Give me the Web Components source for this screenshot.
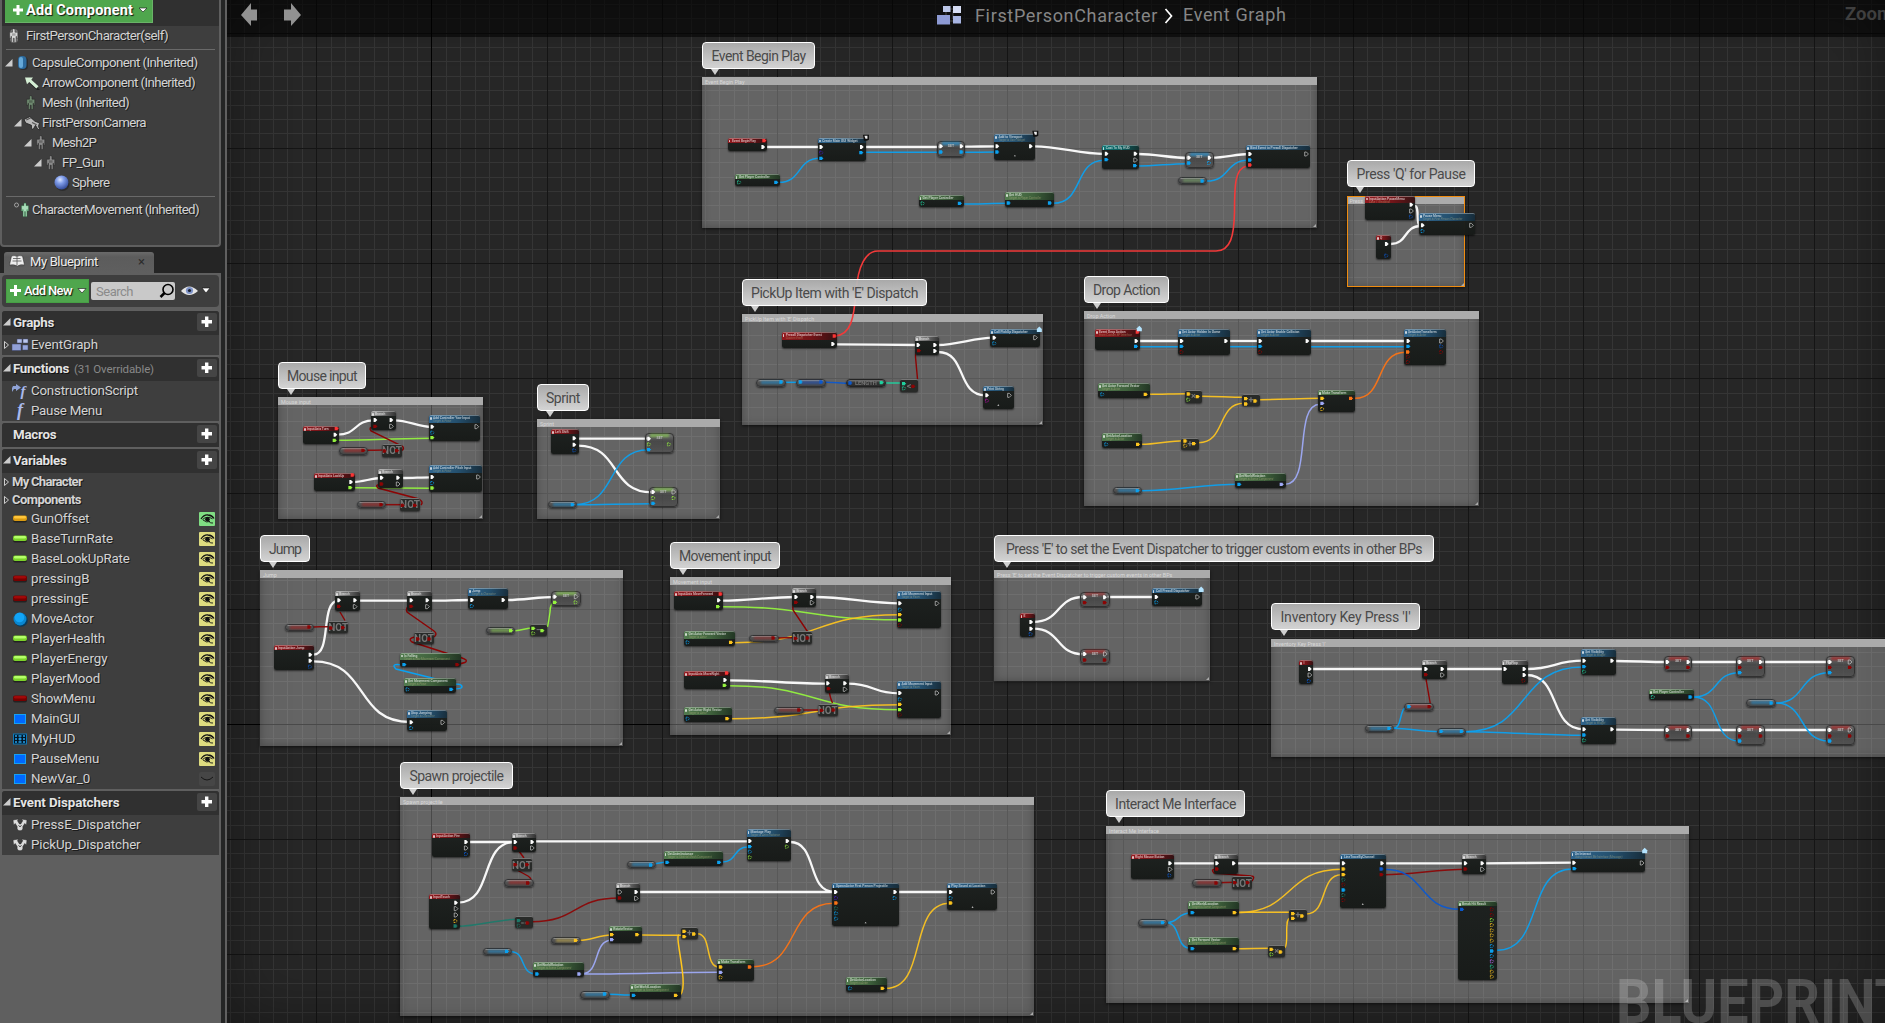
<!DOCTYPE html>
<html lang="en">
<head>
<meta charset="utf-8">
<title>FirstPersonCharacter</title>
<style>
html,body{margin:0;height:100%;overflow:hidden;background:#262626;font-family:Roboto,"Liberation Sans",sans-serif}
</style>
</head>
<body>
<bp-editor></bp-editor>
<script>
const define=(name,css,html,setup)=>customElements.define(name,class extends HTMLElement{
  connectedCallback(){
    if(this.shadowRoot)return;
    const r=this.attachShadow({mode:'open'});
    r.innerHTML='<style>'+css+'</style>'+(typeof html==='function'?html(this):html);
    if(setup)setup(this,r);
  }
});

/* Text run spread to a given advance width */
define('fit-text',':host{display:inline-block;white-space:nowrap}','<slot></slot>',el=>{
  const w=+el.getAttribute('w');if(!w)return;
  const n=el.textContent.length,nat=el.getBoundingClientRect().width;
  el.style.letterSpacing=((w-nat)/n)+'px';
});

const man=(c,g)=>`<g transform="translate(-1.800 -1.400) scale(1.220)"><path d="M6 2.200q1-1 2 0v2.400h2.300v5H9.200V8H8.900v5H7.400V9.500H6.600V13H5.100V8h-.3v1.600H3.700v-5H6z" fill="${c}" stroke="#222" stroke-width=".4"/><path d="M5.500 5.500h3v2h-3z" fill="#000" opacity=".25"/></g>`;
const blk=`<g stroke="#3d456b" stroke-width=".5"><path d="M5 2h5v4H5z" fill="#aebbe8"/><path d="M11 2h5v4h-5z" fill="#bcc8ee"/><path d="M0 7h9v6.500H0z" fill="#91a0d8"/><path d="M10.500 8h5.500v5h-5.500z" fill="#97a6dc"/></g>`;
const pill=(a,b)=>`<rect x="1" y="5.500" width="14" height="6" rx="2" fill="#222"/><rect x="1" y="4.500" width="14" height="5.500" rx="2" fill="${b}"/><rect x="2" y="5" width="12" height="2.500" rx="1.200" fill="${a}"/>`;
const ICONS={
  self:'<rect x="3" y="1" width="8" height="14" rx="4" fill="#777"/>'+man('#d8d8d8'),
  capsule:'<rect x="4" y="2" width="9" height="13" rx="4" fill="#222" opacity=".6"/><rect x="3" y="1" width="8.500" height="13" rx="4" fill="#2c6a9d"/><rect x="4" y="2" width="4" height="11" rx="2" fill="#66a9d8"/>',
  arrow:'<path d="M3 4l11 9 2 2-3 0L6 9z" fill="#222"/><path d="M1 2.500h8L7.300 4.700l7.200 6.500-2.200 2.300L5.200 7 3 9.200z" fill="#d5efd5"/>',
  mesh:man('#6f8a70'),
  mesh2:man('#8b8b8b'),
  camera:'<g transform="translate(0 .5) scale(1.150)"><path d="M0 3.500l5-2.500 4.500 4 4 1.500-1 3 1.500 3-2-.5-2-3.500-2 3.500-1.500-.5L6.500 8.500 1.500 6.500z" fill="#b9b9b9" stroke="#222" stroke-width=".7"/><path d="M2 4l4-2M7 6l4 2" stroke="#555"/></g>',
  sphere:'<defs><radialGradient id="s" cx=".4" cy=".3" r=".7"><stop offset="0" stop-color="#d9e4ff"/><stop offset=".4" stop-color="#7e9be8"/><stop offset="1" stop-color="#344c9a"/></radialGradient></defs><circle cx="8.500" cy="9" r="7" fill="#222" opacity=".6"/><circle cx="7.500" cy="7.500" r="7" fill="url(#s)"/>',
  move:'<circle cx="2.500" cy="3" r="2" fill="none" stroke="#aaa" stroke-width=".9"/><path d="M10 1.200h2v2.500h2.400v5.300h-1.200V7.500h-.3v7h-1.500V9.500h-.8v5H9.100v-7h-.3V9H7.600V3.700H10z" fill="#a9dcb9" stroke="#284" stroke-width=".3"/>',
  graph:blk,
  cons:'<path d="M0 5l1-2h3V1l5 3.500L4 8V6H2L0 9z" fill="#8fa2d6"/><text x="8.500" y="13" font-family="Liberation Serif" font-style="italic" font-weight="700" font-size="15" fill="#a9b9ec">f</text>',
  func:'<text x="5" y="13" font-family="Liberation Serif" font-style="italic" font-weight="700" font-size="18" fill="#a9b9ec">f</text>',
  orange:pill('#ffc53a','#d89a12'),green:pill('#b4ff68','#7bd02a'),red:pill('#a00808','#760000'),
  ball:'<circle cx="9" cy="9" r="6.800" fill="#063a5c"/><circle cx="8" cy="8" r="6.500" fill="#0a86cf"/><circle cx="7.500" cy="6.500" r="4.800" fill="#12a4f6"/>',
  box:'<rect x="2.500" y="3.500" width="11" height="9" fill="#0068ff" stroke="#16a1f2"/>',
  hud:'<rect x="1.500" y="3" width="13" height="10" fill="#031524" stroke="#0c78b8"/><path d="M3 5h2m1.500 0h3M11 5h2M3 8h2m1.500 0h3M11 8h2M3 11h2m1.500 0h3M11 11h2M8 6.500v3" stroke="#27a4ee" stroke-width="1.300"/>',
  disp:'<path d="M1 3l5.500-1-1 1.800L7.500 7h1.200l2-3.200L9.600 2 15 3l-.6 5.200-1.600-1.700-2 3.200a3 3 0 1 1-5.600 0L3.200 6.500 1.600 8.200z" fill="#dcdcdc" stroke="#222" stroke-width=".5"/><path d="M6.500 8.200L8 10l1.500-1.800" fill="none" stroke="#444" stroke-width=".9"/>'
};
define('bp-icon',':host{display:block;width:16px;height:16px;flex:none}svg{display:block;overflow:visible}',
  el=>`<svg width="16" height="16" viewBox="0 0 16 16">${ICONS[el.getAttribute('name')]}</svg>`);

/* Row of a tree: indent, optional expander, icon, label, trailing slot */
define('tree-row',`:host{display:flex;height:var(--h,20px);align-items:center;color:#d4d4d4;font-size:13.300px;position:relative;line-height:16px}
 .x{width:8px;height:8px;flex:none;display:block}
 .b{display:flex;align-items:center;text-shadow:1px 1px 0 #1c1c1c}.b.bold{font-weight:700;font-size:13px}
 .sp{flex:1}`,el=>{
  const a=n=>el.getAttribute(n);
  const ex=a('open')==='1'?'<path d="M7.500 0v7.500H0z" fill="#ccc"/>':a('open')==='0'?'<path d="M1.500 .5v7L5.500 4z" fill="none" stroke="#ccc"/>':'';
  const ic=a('icon')?`<bp-icon name="${a('icon')}" style="margin-left:${a('ig')||3}px"></bp-icon>`:'';
  return `<svg class="x" style="margin-left:${a('in')||3}px" viewBox="0 0 8 8">${ex}</svg>${ic}<span class="b ${a('bold')!==null?'bold':''}" style="margin-left:${a('g')||3}px"><fit-text w="${a('w')}">${a('label')}</fit-text></span><span class="sp"></span><slot></slot>`;
});
define('section-head',`:host{display:flex;height:24px;background:#303030;align-items:center;border-radius:3px 3px 0 0;color:#e4e4e4;font-weight:700;font-size:13.300px;text-shadow:1px 1px 0 #111;box-sizing:border-box;padding-bottom:2px}
 svg{flex:none;display:block}.x{margin:0 2px 0 1px}
 .sub{font-weight:400;font-size:11.500px;color:#888;margin-left:5px;text-shadow:none;padding-top:1px}
 .add{margin-left:auto;margin-right:2px;width:20px;height:18px;background:#454545;border-radius:2px}`,
 el=>`<svg class="x" width="8" height="8"><path d="M7.500 0v7.500H0z" fill="${el.hasAttribute('flat')?'none':'#ccc'}"/></svg>
 <fit-text w="${el.getAttribute('w')}">${el.getAttribute('label')}</fit-text>${el.getAttribute('sub')?`<span class="sub"><fit-text w="80">${el.getAttribute('sub')}</fit-text></span>`:''}
 <svg class="add" width="20" height="18"><path d="M8 3.500h3.400V7H15v3.400h-3.600V14H8v-3.600H4.500V7H8z" fill="#fff"/></svg>`);
define('eye-toggle',`:host{display:block;width:16px;height:14px;margin-right:4px;border-radius:2px}svg{display:block}`,
 el=>el.hasAttribute('off')?'<svg width="16" height="14" style="background:#464646;border-radius:2px"><path d="M2 5q6 6 12 0" fill="none" stroke="#161616"/></svg>'
 :`<svg width="16" height="14" style="background:${el.getAttribute('c')||'#dedc80'};border-radius:1px"><path d="M2 7Q5 2.500 9 3q4 .3 6 3.500" fill="none" stroke="#111" stroke-width="1.300"/><path d="M3.500 7.500Q8 3.500 13.500 6.800M4 8q3.500 3 7 1.500M10 9.500q1.500 2 4 1.500" fill="none" stroke="#111" stroke-width=".9"/><circle cx="8.500" cy="7.200" r="2.300" fill="#111"/></svg>`);

const V=[['GunOffset','orange',58],['BaseTurnRate','green',82],['BaseLookUpRate','green',98.5],['pressingB','red',58.5],['pressingE','red',57.5],['MoveActor','ball',62.5],['PlayerHealth','green',74],['PlayerEnergy','green',76.500],['PlayerMood','green',69],['ShowMenu','red',64],['MainGUI','box',49],['MyHUD','hud',44.500],['PauseMenu','box',68],['NewVar_0','box',59]];
define('side-panel',`:host{display:flex;flex-direction:column;width:221px;height:1023px;background:#252525;flex:none}
 .comp{height:247px;box-sizing:border-box;background:#3e3e3e;border:solid #5f5f5f;border-width:0 2px 2px;border-radius:0 0 4px 4px;flex:none}
 .bar{height:26px;background:#303030;padding-left:3px}
 .add{display:flex;align-items:center;background:#4fa64d;color:#fff;font-weight:700;text-shadow:1px 1px 1px #111;box-sizing:border-box}
 .bar .add{width:148px;height:23px;font-size:14.500px;padding:0 0 2px 7px;gap:2px;border:solid #6ab368;border-width:0 1px 1px 0}
 .sep{height:7px;display:flex;align-items:center}.sep i{height:1px;flex:1;background:#696969;margin:0 4px 0 4px}
 .tabs{height:26px;padding:0 0 0 4px;display:flex;align-items:flex-end;flex:none}
 .tab{width:150px;height:21px;background:linear-gradient(#6a6a6a,#5c5c5c 5px,#5f5f5f);border-radius:3px 3px 0 0;display:flex;align-items:center;color:#eee;font-size:13px;text-shadow:1px 1px 0 #222;padding:0 0 2px 5px;box-sizing:border-box}
 .tab .c{margin-left:auto;margin-right:9px;font-size:13px;color:#2c2c2c;text-shadow:none}
 .bp{flex:1;background:#5f5f5f;padding:2px 2px 0;display:flex;flex-direction:column;gap:2px}
 .tool{height:32px;background:#3e3e3e;border-radius:4px;display:flex;align-items:center;padding-left:4px;margin-bottom:2px}
 .tool .add{width:83px;height:24px;font-weight:500;font-size:13px;padding:0 0 1px 3px;gap:3px;border:1px solid #46a044}
 .srch{width:84px;height:18px;background:#c9c9c9;border-radius:2px;margin-left:2px;display:flex;align-items:center;color:#8b8b8b;font-size:13px;padding-left:5px;box-sizing:border-box}
 .sec{background:#3e3e3e;border-radius:3px 3px 0 0}`,
 `<div class="comp"><div class="bar"><div class="add"><svg width="12" height="12"><path d="M4.500 1h3v3.500H11v3H7.500V11h-3V7.500H1v-3h3.500z" fill="#fff"/></svg><fit-text w="107">Add Component</fit-text><svg width="10" height="8" style="margin-left:3px"><path d="M1 2h8L5 6z" fill="#fff" stroke="#111" stroke-width=".6"/></svg></div></div>
 <tree-row label="FirstPersonCharacter(self)" w="142" icon="self" in="-6" ig="3" g="3"></tree-row>
 <div class="sep"><i></i></div>
 <tree-row open="1" label="CapsuleComponent (Inherited)" w="165.500" icon="capsule" in="3" ig="2" g="1"></tree-row>
 <tree-row label="ArrowComponent (Inherited)" w="153" icon="arrow" in="12" ig="2" g="2"></tree-row>
 <tree-row label="Mesh (Inherited)" w="87" icon="mesh" in="12" ig="2" g="2"></tree-row>
 <tree-row open="1" label="FirstPersonCamera" w="104" icon="camera" in="12" ig="2" g="2"></tree-row>
 <tree-row open="1" label="Mesh2P" w="44" icon="mesh2" in="22" ig="2" g="2"></tree-row>
 <tree-row open="1" label="FP_Gun" w="42" icon="mesh2" in="32" ig="2" g="2"></tree-row>
 <tree-row label="Sphere" w="37.500" icon="sphere" in="42" ig="2" g="2"></tree-row>
 <div class="sep"><i></i></div>
 <tree-row label="CharacterMovement (Inherited)" w="167" icon="move" in="3" ig="1" g="2"></tree-row></div>
 <div class="tabs"><div class="tab"><svg width="16" height="14"><path d="M2.500 1q3-1 5.500.5Q10.500 0 13.500 1l2 9q-4-1-7 1-4-2-8-1z" fill="#eee" stroke="#222" stroke-width=".5"/><path d="M4 3.500h7.500M3.500 6h9M8 2v8M1.500 11.500h13" stroke="#555" stroke-width=".8"/></svg><fit-text w="68" style="margin-left:5px">My Blueprint</fit-text><span class="c">×</span></div></div>
 <div class="bp"><div class="tool"><div class="add"><svg width="11" height="11"><path d="M4 0h3v4h4v3H7v4H4V7H0V4h4z" fill="#fff"/></svg><fit-text w="48">Add New</fit-text><svg width="10" height="8" style="margin-left:2px"><path d="M1 1.500h8L5 6z" fill="#fff" stroke="#111" stroke-width=".6"/></svg></div>
 <div class="srch"><fit-text w="37">Search</fit-text><svg width="16" height="16" style="margin-left:26px"><circle cx="9" cy="6.500" r="5" fill="none" stroke="#000" stroke-width="1.600"/><path d="M5.500 10L1.500 14" stroke="#000" stroke-width="2.500"/></svg></div>
 <svg width="30" height="14" style="margin-left:6px"><path d="M0 7q8-9 17 0-9 8-17 0z" fill="#e5e5e5"/><circle cx="8.500" cy="6.500" r="3.600" fill="#7e93c8"/><circle cx="8.500" cy="6.500" r="1.600" fill="#1b2333"/><path d="M21 4h8l-4 5z" fill="#fff" stroke="#111" stroke-width=".6"/></svg></div>
 <div class="sec"><section-head label="Graphs" w="41"></section-head><tree-row open="0" label="EventGraph" w="67" icon="graph" in="1" ig="1" g="3"></tree-row></div>
 <div class="sec"><section-head label="Functions" w="56" sub="(31 Overridable)"></section-head><tree-row label="ConstructionScript" w="107" icon="cons" in="1" ig="1" g="3"></tree-row><tree-row label="Pause Menu" w="71" icon="func" in="1" ig="1" g="3"></tree-row></div>
 <div class="sec"><section-head flat label="Macros" w="43.500"></section-head></div>
 <div class="sec"><section-head label="Variables" w="53.500"></section-head><tree-row style="--h:18px" bold open="0" label="My Character" w="70" in="1" g="1"></tree-row><tree-row style="--h:18px" bold open="0" label="Components" w="69" in="1" g="1"></tree-row>${V.map((v,i)=>`<tree-row label="${v[0]}" w="${v[2]}" icon="${v[1]}" in="1" ig="1" g="3"><eye-toggle ${i===13?'off':''} c="${i?'#dedc80':'#80dd83'}"></eye-toggle></tree-row>`).join('')}</div>
 <div class="sec"><section-head label="Event Dispatchers" w="106.500"></section-head><tree-row label="PressE_Dispatcher" w="109.500" icon="disp" in="1" ig="1" g="3"></tree-row><tree-row label="PickUp_Dispatcher" w="109.500" icon="disp" in="1" ig="1" g="3"></tree-row></div>
 </div>`);

/* ---- graph canvas ---- */
const C={w:'#ffffff',b:'#0aa2f2',g:'#95f53f',a:'#1fd3a0',r:'#8c0404',y:'#ffc61e',p:'#a0abfa',o:'#ff7414',R:'#ff3434',n:'#0a58d0',m:'#c010b0',t:'#1c7a6a',v:'#4418c0',l:'#c070ff'};
const pin=(x,y,c,h)=>c==='w'
 ?`<path d="M${x-1.700} ${y-2}h1.700l2 2-2 2h-1.700z" ${h?'fill="none" stroke="#ccc" stroke-width=".7"':'fill="#fff"'}/>`
 :h?`<path d="M${x-1.600} ${y-1.500}h2l1.300 1.500-1.300 1.500h-2z" fill="none" stroke="${C[c]}" stroke-width=".8" stroke-dasharray="1.500 .8"/>`
 :`<path d="M${x-2} ${y-1.700}h3v.9l1.300.8-1.300.8v.9h-3z" fill="${C[c]}"/>`;
define('bp-node',`:host{display:block;position:absolute;box-sizing:border-box;border-radius:2px;overflow:visible;box-shadow:0 1px 2px rgba(0,0,0,.6);background:linear-gradient(#1d211f,#171a18);opacity:.98}
 :host([kind=op]){background:#272927;border-top:.5px solid #777}
 :host([kind^=set]){border-radius:4px;border:1px solid #303030;background:linear-gradient(rgba(150,150,150,.25),rgba(60,60,60,.7) 40%,rgba(75,75,75,.75))}
 :host([kind^=var]){border-radius:5px;border:1px solid #2f3133;background:linear-gradient(#a0a0a0,#555 30%,#444)}
 :host([kind=pill]){border-radius:4px;border:1px solid #222;background:linear-gradient(#777,#333 45%,#2b2b2b)}
 .h{height:5px;border-radius:2px 2px 0 0;overflow:hidden;white-space:nowrap;color:rgba(255,255,255,.62);font:700 3.300px/5px Roboto,sans-serif;padding-left:4px;box-sizing:border-box;border-top:.5px solid rgba(255,255,255,.35);position:relative}
 .h:before{content:"";position:absolute;left:1px;top:1px;width:1.500px;height:2.500px;background:rgba(255,255,255,.75);border-radius:1px}
 .h.s{height:7.600px;line-height:4px}.h small{display:block;font:italic 2.900px/3px Roboto,sans-serif;color:rgba(220,210,150,.4)}
 .red{background:linear-gradient(100deg,#94181d,#721216 55%,#301012)}
 .blue{background:linear-gradient(100deg,#2f6690,#23506f 55%,#162c3a)}
 .green{background:linear-gradient(100deg,#527d4f,#40633d 55%,#203522)}
 .grey{background:linear-gradient(100deg,#9a9a9a,#747474 45%,#303030)}
 .teal{background:linear-gradient(100deg,#0a7777,#0b5c5c 55%,#12302f)}
 .set{position:absolute;left:0;right:0;top:1.500px;text-align:center;font:700 3.500px/4px Roboto,sans-serif;color:#bbb}
 .glow{position:absolute;inset:0 15% auto;height:2.500px;filter:blur(1px);opacity:.75}
 .op{position:absolute;inset:0;display:flex;align-items:center;justify-content:center;color:#777;font:700 9px/9px Roboto,sans-serif;white-space:nowrap}
 svg{position:absolute;left:0;top:0;overflow:visible;width:1px;height:1px}`,
 el=>{
  const k=el.getAttribute('kind'),t=(el.getAttribute('title-text')||'').split('|');
  let s='';
  const tint={b:'#1f8fd0',r:'#b02020',g:'#86c850',y:'#c8b050',n:'#1a50c0',q:'#7aa86a'};
  if(k.startsWith('set'))s=`<div class="glow" style="background:${tint[k[3]]}"></div><div class="set">SET</div>`;
  else if(k.startsWith('var'))s=`<div class="glow" style="background:${tint[k[3]]};height:60%;top:15%;opacity:.6"></div>`;
  else if(k==='op'||k==='pill')s=`<div class="op" style="font-size:${t[1]||9}px">${t[0]}</div>`;
  else s=`<div class="h ${k} ${t[1]?'s':''}">${t[0]}${t[1]?`<small>${t[1]}</small>`:''}</div>`;
  return s+`<svg>${el.pins||''}</svg>`;
 });
define('comment-box',`:host{display:block;position:absolute;box-sizing:border-box;background:rgba(255,255,255,.285);box-shadow:inset 0 0 8px rgba(0,0,0,.28),0 1px 3px rgba(0,0,0,.6)}
 .t{height:8px;background:#ababab;color:rgba(255,255,255,.55);font:5.400px/10px Roboto,sans-serif;padding-left:3px;white-space:nowrap;overflow:hidden}
 :host([sel]){outline:1.500px solid #f08c10;outline-offset:-1px}
 i{position:absolute;right:1px;bottom:1px;border:solid transparent;border-width:0 0 3px 3px;border-bottom-color:#aaa}`,
 '<div class="t"><slot></slot></div><i></i>');
define('comment-bubble',`:host{display:flex;position:absolute;height:27px;box-sizing:border-box;border:1px solid #fff;border-radius:4px;background:linear-gradient(rgba(176,176,176,.95),rgba(222,222,222,.94));align-items:center;justify-content:center;color:#4a4a4a;font-size:14px;line-height:25px;padding-top:1px}
 i{position:absolute;left:8px;top:26px;border:solid transparent;border-width:6px 4px 0;border-top-color:#cfcfcf}`,'<slot></slot><i></i>');

/* Each sheet: origin and scale of its coordinate space, then
   N kind l t r b "title" pins   |   W colour x1 y1 x2 y2   |   S colour width raw path */
const SHEETS=[
['690 30 2.45 3',`
W w 188 351 320 351
W w 431 351 612 351
W b 431 367 612 367
W w 672 350 752 349
W b 672 367 752 366
W w 845 349 1015 372
W w 1099 372 1220 384
W b 1099 408 1218 401
W w 1280 383 1370 372
W b 218 457 318 385
W b 670 522 778 520
W b 890 520 1015 391
W b 1266 453 1368 391
N red 93 323 188 362 "Event BeginPlay" 179,350,w 182,331,R
N blue 314 323 431 394 "Create Main GUI Widget" 322,350,w 421,350,w 322,367,vh 420,367,b 322,384,b
N setb 604 334 675 380 "" 614,350,w 664,350,w 614,367,b 664,367,b
N blue 746 312 845 389 "Add to Viewport|Target is User Widget" 754,349,w 836,349,w 754,366,b
N teal 1009 346 1100 418 "Cast To My HUD" 1020,372,w 1091,372,w 1091,391,wh 1020,390,b 1090,408,b
N setb 1213 367 1283 413 "" 1223,384,w 1273,384,w 1223,400,b 1272,400,bh
N blue 1363 345 1519 415 "Bind Event to PressE Dispatcher" 1373,372,w 1511,372,wh 1373,390,b 1373,405,R
N green 110 432 220 467 "Get Player Controller" 120,457,ah 211,457,b
N green 560 496 671 532 "Get Player Controller" 569,521,ah 660,521,b
N green 772 487 892 531 "Get HUD|Target is Player Controller" 781,520,b 882,520,b
N varq 1196 441 1267 463 "" 1256,453,b
B clock 431 323
B clock 846 311
B caret 796 379`],
['1060 150 3 3',`
W w 1064 168 1082 228
W w 992 282 1082 228
W w 240 573 360 573
W w 510 573 597 573
W w 752 573 1040 573
W b 240 590 360 590
W b 510 590 597 590
W b 752 590 1040 590
W o 884 745 1036 607
W y 268 733 380 731
W y 424 739 552 742
W y 600 749 782 745
W y 416 878 552 760
W y 245 883 372 872
W p 676 1003 780 763
W b 245 1022 534 1003
N red 915 137 1065 210 "InputAction PauseMenu|Case 1 (Enabled)" 1054,163,w 1054,182,wh 1053,199,nh
N blue 1077 190 1245 254 "Pause Menu|Target is First Person Character" 1088,227,w 1234,227,wh 1088,244,bh
N red 948 255 993 328 "Q" 980,282,w 979,317,nh
N red 105 537 240 601 "Event Drop Action|From Custom BP Interface" 229,573,w 228,589,b 233,546,R
N blue 354 537 510 615 "Set Actor Hidden In Game|Target is Actor" 365,573,w 498,573,w 365,589,b 365,606,rh
N blue 591 537 753 615 "Set Actor Enable Collision|Target is Actor" 601,573,w 742,573,w 601,589,b 601,606,rh
N blue 1032 537 1158 646 "SetActorTransform|Target is Actor" 1045,573,w 1144,573,wh 1045,589,b 1144,589,nh 1044,606,o 1144,606,rh 1044,620,rh 1044,636,rh
N green 114 699 269 743 "Get Actor Forward Vector|Target is Actor" 127,733,bh 257,733,y
N green 126 849 245 895 "GetActorLocation|Target is Actor" 139,883,bh 234,883,y
N op 375 721 426 758 "×" 386,730,y 385,747,gh 413,738,y
N op 546 731 600 769 "+" 558,742,y 558,758,y 586,749,y
N op 363 865 416 899 "+" 376,871,y 376,885,yh 402,879,y
N green 774 720 885 787 "Make Transform" 787,745,y 787,760,p 787,777,yh 873,745,o
N green 525 969 677 1013 "GetWorldRotation|Target is Scene Component" 538,1003,b 665,1003,p
N varb 159 1011 245 1033 "" 233,1022,b
B blue 238 538`],
['730 230 3 3',`
W w 318 343 562 345
W w 624 345 790 323
W w 624 366 766 496
W b 166 457 208 457
W n 286 457 360 460
W a 467 459 518 459
S r 1.4 M917.500 379 L915.500 357 Q915 352 919 350
N red 155 307 321 354 "PressE Dispatcher Event|Custom Event" 308,343,w 313,319,R
N grey 555 318 626 375 "Branch" 565,345,w 615,345,w 567,362,r 615,363,w
N blue 780 297 930 350 "Call PickUp Dispatcher" 793,323,w 916,323,wh 793,340,bh
N blue 759 468 852 536 "Print String" 771,496,w 838,496,wh 771,512,mh
N varb 78 448 167 470 "" 154,457,b
N varn 198 448 287 470 "" 212,457,b 274,457,n
N pill 348 448 467 472 "LENGTH|5.700" 361,460,n 455,459,a
N op 510 448 564 486 "&lt;" 522,459,a 522,473,ah 550,467,r
B blue 928 300
B caret 805 527`],
['250 350 3 3',`
W w 262 254 372 211
W w 435 211 545 231
W g 262 271 545 265
W w 310 396 394 384
W w 458 384 545 382
W g 312 413 545 415
W r 340 301 404 300
S r 1.400 M402 450.500 Q405 448 402 446 L371 431 Q368 427 374 427
W r 394 464 456 464
S r 1.400 M421 505 Q424 502 419 499 L378 488 Q374 484 382 485
W w 984 266 1196 266
W w 984 287 1206 427
W b 974 464 1196 299
W b 974 464 1206 461
W w 190 914 266 752
W w 190 934 480 1116
W w 328 752 480 752
W w 544 752 666 750
W w 772 750 914 741
W g 796 842 848 834
S g 1.400 M547.500 627 Q549 620 550 612 Q550 603 555 602.500
W r 178 831 240 830
S r 1.400 M345 620.500 L340 612
S r 1.400 M434 637 Q438 634 434 631 L407 612 Q405 607 411 606
S r 1.400 M457 664 Q468 663 466 660 Q464 658 449 654 L412 642 Q407 638 416 637
S b 1.500 M452 689 Q462 689 462 687 Q462 684 456 684 L396 669 Q390 663 402 665
N red 159 228 267 282 "InputAxis Turn" 256,254,w 254,271,g 260,236,R
N grey 363 184 437 241 "Branch" 376,211,w 424,211,w 376,230,r 424,230,wh
N blue 537 196 690 272 "Add Controller Yaw Input|Target is Pawn" 547,231,w 680,231,wh 547,249,bh 547,264,g
N varr 267 291 353 314 "" 340,301,r
N op 396 282 456 320 "NOT|10" 404,300,r 441,299,r
N red 192 369 314 422 "InputAxis LookUp" 303,396,w 301,413,g 308,375,R
N grey 385 358 458 413 "Branch" 396,384,w 445,384,w 396,403,r 445,403,wh
N blue 537 346 695 426 "Add Controller Pitch Input|Target is Pawn" 547,382,w 685,382,wh 547,400,bh 547,415,g
N varr 321 453 408 475 "" 394,464,r
N op 450 445 510 482 "NOT|10" 458,464,r 495,464,r
N red 903 238 986 313 "Left Shift" 973,266,w 973,285,w 973,302,nh
N setg 1186 249 1272 310 "" 1198,266,w 1198,283,gh 1258,283,gh 1198,299,b
N setg 1196 412 1283 472 "" 1209,427,w 1270,427,wh 1209,445,gh 1270,445,gh 1209,461,b
N varb 894 453 981 475 "" 968,464,b
N grey 256 724 329 782 "Branch" 268,752,w 316,752,w 268,770,r 316,771,wh
N grey 471 724 545 782 "Branch" 484,752,w 532,752,w 484,770,r 532,771,wh
N blue 654 714 773 776 "Jump|Target is Character" 666,750,w 760,750,w 666,768,bh
N setg 904 724 992 769 "" 916,741,w 979,741,wh 916,758,g 978,758,gh
N varr 105 822 192 843 "" 178,831,r
N op 234 812 295 849 "NOT|10" 243,830,r 279,829,r
N varg 709 831 796 853 "" 784,842,g
N op 840 823 890 859 "−" 850,833,g 850,848,gh 877,840,g
N red 72 885 192 961 "InputAction Jump" 181,914,w 181,932,w 180,950,nh
N op 492 845 552 881 "NOT|10" 504,863,r 538,863,r
N green 450 908 633 952 "Is Falling|Target is Nav Movement Component" 463,943,b 622,943,r
N green 462 984 617 1028 "Get Movement Component|Target is Pawn" 473,1018,bh 604,1018,b
N blue 471 1080 591 1142 "Stop Jumping|Target is Character" 484,1117,w 578,1117,wh 484,1134,bh`],
['650 530 2.7034 3',`
W w 194 212 393 201
W w 448 201 674 220
W g 194 230 674 269
W y 228 338 674 254
W r 334 324 392 323
S r 1.400 M810.500 636 L793 610 Q792 603 797 602.500
W w 212 451 480 461
W w 534 461 674 490
W g 212 467 674 539
W y 218 566 674 524
W r 404 540 462 540
S r 1.400 M832.500 703 Q830 698 829 690
W w 1036 276 1172 201
W w 1036 296 1172 373
W w 1236 201 1366 201
N red 65 183 197 239 "InputAxis MoveForward" 186,211,w 184,230,g 191,192,R
N grey 385 174 450 232 "Branch" 396,201,w 439,201,w 396,217,r 439,218,wh
N blue 669 183 787 294 "Add Movement Input|Target is Pawn" 677,220,w 777,220,wh 677,239,bh 677,254,y 677,270,g 677,285,rh
N green 93 304 231 348 "Get Actor Forward Vector|Target is Actor" 103,338,bh 220,338,y
N varr 268 315 348 335 "" 334,324,r
N op 385 304 438 343 "NOT|10" 395,323,r 427,322,r
N red 93 424 215 476 "InputAxis MoveRight" 204,451,w 203,467,g 209,430,R
N grey 474 433 537 490 "Branch" 482,461,w 528,461,w 484,477,r 528,479,wh
N blue 669 454 787 565 "Add Movement Input|Target is Pawn" 677,490,w 777,490,wh 677,509,bh 677,524,y 677,540,g 677,555,rh
N green 93 531 221 575 "Get Actor Right Vector|Target is Actor" 103,566,bh 210,566,y
N varr 336 531 415 551 "" 404,540,r
N op 454 522 507 559 "NOT|10" 464,538,r 496,537,r
N red 999 249 1040 322 "E" 1029,276,w 1029,296,w 1028,312,nh
N setr 1163 185 1243 230 "" 1176,201,w 1230,201,w 1176,217,r 1230,217,r
N setr 1163 358 1243 403 "" 1176,373,w 1231,373,wh 1176,391,r 1230,391,r
N blue 1357 174 1492 227 "Call PressE Dispatcher" 1369,201,w 1480,201,wh 1369,217,bh
B blue 1490 180`],
['1260 590 2.5088 3',`
W w 132 237 414 237
W w 466 237 612 237
W w 668 237 812 212
W w 668 255 812 418
W w 890 213 1020 216
W w 1080 216 1202 216
W w 1260 216 1428 216
W w 890 419 1020 420
W w 1080 420 1202 420
W w 1260 420 1428 420
W b 334 415 372 350
W b 334 415 450 425
W b 514 425 810 231
W b 514 425 810 436
W b 1088 321 1202 248
W b 1088 321 1202 453
W b 1293 339 1428 248
W b 1293 339 1428 453
S r 1.400 M1430.500 705 L1426 679
N red 99 210 134 283 "I" 126,237,w 126,255,wh 124,273,nh
N grey 407 210 469 268 "Branch" 417,237,w 458,237,w 417,254,r 458,255,wh
N grey 607 210 672 282 "FlipFlop" 615,237,w 663,237,w 663,255,w 661,272,rh
N blue 806 178 893 255 "Set Visibility|Target is Widget" 814,213,w 884,213,w 814,231,b 814,246,ah
N blue 806 382 893 461 "Set Visibility|Target is Widget" 814,419,w 884,419,w 814,436,b 814,452,ah
N setr 1014 198 1085 244 "" 1023,216,w 1075,216,w 1023,232,r 1075,232,r
N setr 1194 198 1266 260 "" 1204,216,w 1256,216,w 1204,232,r 1256,232,r 1204,248,b
N setr 1421 198 1492 260 "" 1431,216,w 1481,216,wh 1431,232,r 1481,232,r 1431,248,b
N setr 1014 405 1085 449 "" 1023,420,w 1075,420,w 1023,438,r 1075,438,r
N setr 1194 405 1266 464 "" 1204,420,w 1256,420,w 1204,438,r 1256,438,r 1204,453,b
N setr 1421 405 1492 464 "" 1431,420,w 1481,420,wh 1431,438,r 1481,438,r 1431,453,b
N green 976 297 1090 331 "Get Player Controller" 986,321,ah 1080,321,b
N varb 1219 327 1295 350 "" 1283,339,b
N varr 361 339 436 362 "" 374,350,b 425,350,r
N varb 263 405 336 426 "" 324,415,b
N varb 444 415 516 437 "" 455,425,b 506,425,b`],
['390 755 2.3758 3',`
W w 188 261 296 261
W w 162 443 296 261
W w 345 259 852 259
W w 950 261 1056 411
W w 592 411 1056 411
W w 1207 411 1330 411
W b 620 328 654 322
W b 790 321 850 276
W t 162 514 302 493
W r 336 500 544 429
W y 450 556 524 540
W p 456 656 526 556
W p 456 657 784 652
W b 288 590 344 656
W b 520 718 576 720
W y 596 540 696 541
W y 730 536 782 636
S y 1.500 M680.500 994.500 C689 985 674 935 679 935
W o 862 635 1054 445
W y 1178 700 1330 445
S r 1.400 M524 858 L516 847
S r 1.400 M530 884 Q533 879 528 876 L517 870
N red 100 234 191 306 "InputAction Fire" 181,261,w 181,279,wh 181,297,nh
N grey 290 234 347 291 "Branch" 298,261,w 338,261,w 298,279,r 338,279,wh
N op 290 310 337 348 "NOT|10" 298,327,r 326,327,r
N varr 271 372 342 395 "" 328,384,r
N blue 847 223 953 317 "Montage Play|Target is Anim Instance" 854,259,w 943,259,w 854,276,b 942,276,gh 854,291,bh 854,308,gh
N green 650 288 791 332 "GetAnimInstance|Target is Skeletal Mesh Component" 658,322,b 781,322,b
N varb 563 318 632 340 "" 620,330,b
N red 93 418 166 523 "InputTouch" 157,444,w 157,462,wh 157,481,wh 156,499,yh 156,514,t
N op 298 482 340 520 "==|6" 307,493,t 307,508,th 328,500,r
N grey 537 384 594 442 "Branch" 546,411,wh 585,411,w 546,429,r 585,430,wh
N blue 1050 384 1209 514 "SpawnActor First Person Projectile" 1059,411,w 1200,411,w 1060,429,vh 1199,429,bh 1060,444,o 1060,460,th 1060,475,bh 1060,491,bh
N blue 1324 384 1443 466 "Play Sound at Location" 1333,411,w 1433,411,wh 1333,429,bh 1333,444,y
N green 521 514 599 565 "RotateVector" 528,540,y 588,540,y 528,555,p
N vary 382 546 453 568 "" 441,556,y
N varb 221 579 290 600 "" 278,589,b
N green 340 621 461 665 "GetWorldRotation|Target is Scene Component" 350,657,b 450,657,p
N op 691 515 732 552 "+" 699,525,y 699,541,y 722,533,y
N green 777 612 865 677 "Make Transform" 786,636,y 786,652,p 786,667,yh 855,636,o
N green 571 687 691 731 "GetWorldLocation|Target is Scene Component" 580,721,b 680,721,y
N varb 451 709 522 731 "" 510,718,b
N green 1083 666 1181 710 "GetActorLocation|Target is Actor" 1093,700,bh 1170,700,y
B caret 1130 505
B caret 1384 458`],
['1090 780 1.9723 3',`
W w 162 250 250 250
W w 288 250 498 250
W w 580 250 740 250
W w 776 250 952 248
W r 580 284 740 268
W n 580 268 730 388
W b 802 511 952 267
W y 290 398 496 268
W y 290 397 398 397
W y 426 402 496 284
W y 290 506 356 505
W b 150 428 198 399
W b 150 428 198 505
S y 1.400 M1285 948 C1288 943 1286 932 1287 925 Q1287 918 1292 917
W r 248 308 286 307
S r 1.400 M1252 881 Q1256 876 1251 876 L1214 873 Q1210 869 1217 869
N red 81 222 166 296 "Right Mouse Button" 158,250,w 158,268,wh 157,286,nh
N grey 245 222 292 281 "Branch" 251,250,w 284,250,w 251,267,r
N varr 201 297 260 320 "" 249,309,r
N op 280 289 320 327 "NOT|10" 286,306,r 311,306,r
N blue 493 222 583 383 "LineTraceByChannel" 500,250,w 576,250,w 500,267,y 575,267,n 500,284,y 575,284,r 500,299,th 500,314,rh 500,330,b 500,345,th 500,360,rh
N grey 734 222 781 281 "Branch" 741,250,w 774,250,w 741,267,r 774,268,wh
N blue 948 213 1095 277 "On Interact|Using Interact Me Interface (Message)" 954,248,w 1088,249,wh 955,266,b
N green 193 363 294 407 "GetWorldLocation|Target is Scene Component" 202,398,b 285,398,y
N green 193 471 294 516 "Get Forward Vector|Target is Scene Component" 202,506,b 285,506,y
N varb 95 416 153 440 "" 144,427,b
N op 392 386 428 423 "+" 400,397,y 400,411,y 418,404,y
N op 351 494 385 531 "×" 358,504,y 358,519,gh 376,512,y
N green 726 363 802 601 "Break Hit Result" 734,388,n 793,388,rh 793,405,rh 793,420,gh 793,435,yh 793,451,yh 793,466,yh 793,482,yh 793,498,bh 793,513,b 793,528,bh 793,544,lh 793,560,ah 793,575,yh 793,590,yh
B blue 1094 214
B caret 538 374`]];
const BOXES=[
['Event Begin Play',702,77,615,151,42,113],["Press 'Q' for Pause",1346.500,195.500,118,91,160,128,1],['Drop Action',1084,311,394.500,195,276,85],
["PickUp Item with 'E' Dispatch",742,314,301,111,279,185],['Mouse input',278,397,204.500,122,362,88],['Sprint',537,419,183,100,384,52],['Jump',260,570,363,176,535,50],
['Movement input',670,577,280.500,158,542,110],["Press 'E' to set the Event Dispatcher to trigger custom events in other BPs",994,570,216,111,535,440],
["Inventory Key Press 'I'",1271,639,640,118,603,149],['Spawn projectile',400,797,633.500,219,762,113],['Interact Me Interface',1106,825.500,582.500,177,790,139]];
const BLW=[94,109,67,167,70,34,32,92,416,130,94,121];

define('graph-grid',':host{display:block;position:absolute;inset:0}svg{display:block}',()=>{
  let mi='',ma='',or='';
  for(let k=-16;k<108;k++){const x=Math.round(431.350+k*14.400)-227;if(x<0||x>1658)continue;const r=`M${x+.5} 0V1023`;if(k===0)or+=r;else if(k%8===0)ma+=r;else mi+=r}
  for(let k=-50;k<22;k++){const y=Math.round(723.750+k*14.400);if(y<0||y>1023)continue;const r=`M0 ${y+.5}H1658`;if(k===0)or+=r;else if(k%8===0)ma+=r;else mi+=r}
  return `<svg width="1658" height="1023"><path d="${mi}" stroke="#353535"/><path d="${ma}" stroke="#151515"/><path d="${or}" stroke="#000"/></svg>`;
});
define('event-graph',`:host{display:block;position:relative;flex:1;height:1023px;background:#262626;overflow:hidden}
 .free{position:absolute;left:-227px;top:0;width:1885px;height:1023px}
 .wires{position:absolute;left:0;top:0;pointer-events:none}
 .vig{position:absolute;inset:0;box-shadow:inset 0 0 60px rgba(0,0,0,.4)}
 .top{position:absolute;left:0;top:0;right:0;height:37px;background:rgba(0,0,0,.56);display:flex;color:#868686;font-size:18px;box-sizing:border-box}
 .nav{display:flex;gap:26px;padding:3px 0 0 14px}
 .path{display:flex;padding-left:636px;line-height:20px}
 .zoom{position:absolute;right:-8px;top:4px;font:700 18.500px/20px Roboto,sans-serif;color:#3f3f3f}
 .mark{position:absolute;left:0;top:0}`,
 `<graph-grid></graph-grid><div class="vig"></div><div class="free"></div>
 <div class="top"><div class="nav"><svg width="17" height="24"><path d="M0 12L10 0v6.500h6v11h-6V23z" fill="#929292"/></svg><svg width="17" height="24"><path d="M17 12L7 0v6.500H0v11h7V23z" fill="#929292"/></svg></div>
 <div class="path"><svg width="25" height="20" style="margin-top:5px" viewBox="0 0 25 20"><path d="M9 4h10M9 4v12h12M16 6v8" stroke="#555" stroke-width=".8" fill="none"/><path d="M6 1h7.500v6H6z" fill="#bcc7e8"/><path d="M16 1h8v7h-8z" fill="#d7def5"/><path d="M0 10h13v9.500H0z" fill="#8d9ad4"/><path d="M16 11h8v7.500h-8z" fill="#a7b4e2"/></svg>
 <fit-text w="183" style="margin:6px 0 0 13px">FirstPersonCharacter</fit-text><svg width="10" height="16" style="margin:8px 0 0 6px"><path d="M1.500 1l6 7-6 7" fill="none" stroke="#fff" stroke-width="1.700"/></svg><fit-text w="103.500" style="margin:5px 0 0 9px">Event Graph</fit-text></div><span class="zoom">Zoom</span></div>`,
 (el,r)=>{
  const f=r.querySelector('.free');let wires='',marks='';
  BOXES.forEach((b,i)=>{
    const c=document.createElement('comment-box');c.textContent=b[0];c.style.cssText=`left:${b[1]}px;top:${b[2]}px;width:${b[3]}px;height:${b[4]}px`;if(b[7])c.setAttribute('sel','');f.append(c);
  });
  const svg=document.createElement('div');f.append(svg);
  for(const [o,src] of SHEETS){
    const [ox,oy,sx,sy]=o.split(' ').map(Number),X=x=>ox+x/sx,Y=y=>oy+y/sy;
    for(const line of src.trim().split('\n')){
      const p=line.split(' ');
      if(p[0]==='W'){
        const [x1,y1,x2,y2]=[X(+p[2]),Y(+p[3]),X(+p[4]),Y(+p[5])],dy=Math.abs(y2-y1),k=dy<8?Math.abs(x2-x1)/3:Math.min(Math.abs(x2-x1)*.5+dy*.12,(x2-x1)*.9);
        wires+=`<path d="M${x1} ${y1}C${x1+k} ${y1} ${x2-k} ${y2} ${x2} ${y2}" stroke="${C[p[1]]}" stroke-width="${p[1]==='w'?2.300:1.500}" opacity="${p[1]==='w'?.95:.92}"/>`;
      }else if(p[0]==='S'){wires+=`<path d="${p.slice(3).join(' ')}" stroke="${C[p[1]]}" stroke-width="${p[2]}"/>`;
      }else if(p[0]==='B'){
        const x=X(+p[2]),y=Y(+p[3]);
        marks+=p[1]==='clock'?`<path d="M${x-3} ${y-3}h6v5l-2 1h-3z" fill="#111"/><path d="M${x-1.500} ${y-2}h3v3h-2z" fill="#eee"/>`
          :p[1]==='blue'?`<path d="M${x-2.500} ${y-1}l2.500-2.500 2.500 2.500v3h-5z" fill="#b4e4ff"/>`:`<path d="M${x-1} ${y}l1-1.300 1 1.300z" fill="#ddd"/>`;
      }else{
        const m=line.match(/^N (\S+) (\S+) (\S+) (\S+) (\S+) "(.*?)" ?(.*)$/),l=X(+m[2]),t=Y(+m[3]),bord=/^(set|var|pill)/.test(m[1])?1:0;
        const n=document.createElement('bp-node');n.setAttribute('kind',m[1]);n.setAttribute('title-text',m[6]);
        n.style.cssText=`left:${l}px;top:${t}px;width:${X(+m[4])-l}px;height:${Y(+m[5])-t}px`;
        n.pins=m[7]?m[7].split(' ').map(q=>{const [a,b,c]=q.split(',');return pin(X(+a)-l-bord,Y(+b)-t-bord,c[0],c[1]==='h')}).join(''):'';
        f.append(n);
      }
    }
  }
  wires+=`<path d="M835 336C851 335 854 318 856 292C858 265 866 251 878 251H1216C1231 251 1234 235 1234.500 212C1234.500 185 1235 168 1247 166" stroke="#f23a3a" stroke-width="1.600"/>`;
  svg.innerHTML=`<svg class="wires" width="1885" height="1023" fill="none">${wires}</svg>`;
  f.insertAdjacentHTML('beforeend',`<svg class="wires" width="1885" height="1023">${marks}</svg>`);
  BOXES.forEach((b,i)=>{
    const u=document.createElement('comment-bubble');u.style.cssText=`left:${i===1?1347:b[1]}px;top:${b[5]}px;width:${b[6]}px`;
    u.innerHTML=`<fit-text w="${BLW[i]}">${b[0]}</fit-text>`;f.append(u);
  });
  f.insertAdjacentHTML('beforeend',`<svg class="mark" width="1885" height="1023"><text x="1616" y="1023" font-family="Roboto" font-weight="700" font-size="62" textLength="293" lengthAdjust="spacingAndGlyphs" fill="#fff" fill-opacity=".2">BLUEPRINT</text></svg>`);
 });
define('bp-editor',`:host{display:flex;width:1885px;height:1023px;overflow:hidden}
 .split{width:4px;background:#242525;border:solid #606060;border-width:0 2px 0 0;flex:none}`,
 '<side-panel></side-panel><div class="split"></div><event-graph></event-graph>');
</script>
</body>
</html>
